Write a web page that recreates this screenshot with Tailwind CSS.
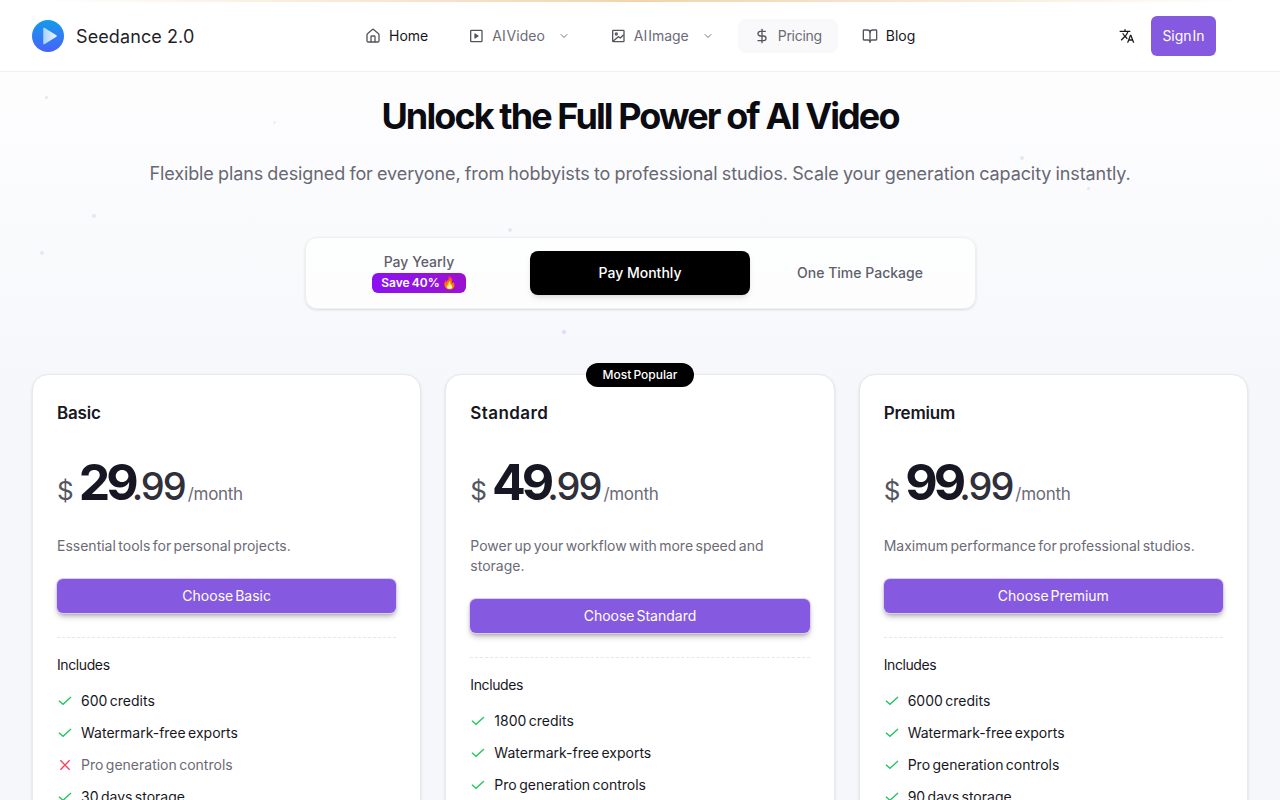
<!DOCTYPE html>
<html lang="en">
<head>
    <meta charset="UTF-8">
    <meta name="viewport" content="width=device-width, initial-scale=1.0">
    <title>Pricing - Seedance 2.0</title>
    <script src="https://cdn.jsdelivr.net/npm/@tailwindcss/browser@4"></script>
</head>
<body class="relative bg-gradient-to-b from-white to-[#f6f7fb] to-50% font-['Inter',sans-serif] text-[#171723] h-[800px] overflow-hidden">

    <!-- background specks -->
    <div class="absolute left-[45px] top-[96px] w-[3px] h-[3px] rounded-full bg-[#e6e7ef]"></div>
    <div class="absolute left-[273px] top-[121px] w-[3px] h-[3px] rounded-full bg-[#eceef4]"></div>
    <div class="absolute left-[92px] top-[214px] w-[4px] h-[4px] rounded-full bg-[#e6e7ef]"></div>
    <div class="absolute left-[40px] top-[251px] w-[4px] h-[4px] rounded-full bg-[#e6e7ef]"></div>
    <div class="absolute left-[508px] top-[228px] w-[4px] h-[4px] rounded-full bg-[#e6e7ef]"></div>
    <div class="absolute left-[562px] top-[330px] w-[4px] h-[4px] rounded-full bg-[#dcdcfa]"></div>
    <div class="absolute left-[1020px] top-[156px] w-[4px] h-[4px] rounded-full bg-[#e6e7ef]"></div>
    <div class="absolute left-[1087px] top-[187px] w-[3px] h-[3px] rounded-full bg-[#e6e7ef]"></div>

    <header class="relative h-[72px] bg-white/80 border-b border-[#f0f0f4]">
        <div class="absolute top-0 left-[40px] right-[32px] h-[2px] bg-gradient-to-r from-transparent via-[#f3d3ad] to-transparent"></div>
        <div class="h-full flex items-center pl-8 pr-16">
            <div class="flex items-center gap-3 w-[317px]">
                <svg class="w-8 h-8" viewBox="0 0 32 32">
                    <defs>
                        <linearGradient id="logo" x1="0" y1="0" x2="0" y2="1"><stop offset="0" stop-color="#119bea"/><stop offset="1" stop-color="#4a62fb"/></linearGradient>
                        <linearGradient id="play" x1="0" y1="0" x2="1" y2="0"><stop offset="0" stop-color="#a9d4fa"/><stop offset="1" stop-color="#eaf4fe"/></linearGradient>
                    </defs>
                    <circle cx="16" cy="16" r="16" fill="url(#logo)"/>
                    <path d="M12 8.5 L24 16 L12 23.5 Z" fill="url(#play)" stroke="url(#play)" stroke-width="1.5" stroke-linejoin="round"/>
                </svg>
                <span class="text-[18px] tracking-[0.1px] pt-[1px] text-[#1f1f29]">Seedance 2.0</span>
            </div>

            <nav class="flex items-center gap-2 text-sm">
                <a class="flex items-center gap-2 px-4 h-[34px] text-[#18181b]">
                    <svg class="w-4 h-4 text-[#55555f]" viewBox="0 0 24 24" fill="none" stroke="currentColor" stroke-width="2" stroke-linecap="round" stroke-linejoin="round"><path d="M15 21v-8a1 1 0 0 0-1-1h-4a1 1 0 0 0-1 1v8"/><path d="M3 10a2 2 0 0 1 .709-1.528l7-5.999a2 2 0 0 1 2.582 0l7 5.999A2 2 0 0 1 21 10v9a2 2 0 0 1-2 2H5a2 2 0 0 1-2-2z"/></svg>
                    Home
                </a>
                <a class="flex items-center gap-2 px-4 h-[34px] text-[#6b6b76]">
                    <svg class="w-4 h-4 text-[#55555f]" viewBox="0 0 24 24" fill="none" stroke="currentColor" stroke-width="2" stroke-linejoin="round"><rect x="4" y="3.5" width="17" height="17" rx="1"/><path d="M10.5 9l4.5 3-4.5 3z" fill="currentColor"/></svg>
                    <span class="[word-spacing:-3px]">AI Video</span>
                    <svg class="w-3 h-3 ml-[5px] text-[#77777f]" viewBox="0 0 24 24" fill="none" stroke="currentColor" stroke-width="2" stroke-linecap="round" stroke-linejoin="round"><path d="m6 9 6 6 6-6"/></svg>
                </a>
                <a class="flex items-center gap-2 px-4 h-[34px] text-[#6b6b76]">
                    <svg class="w-4 h-4 text-[#55555f]" viewBox="0 0 24 24" fill="none" stroke="currentColor" stroke-width="2" stroke-linejoin="round"><rect x="4" y="3.5" width="17" height="17" rx="1"/><circle cx="9.5" cy="9" r="1.5"/><path d="M20.5 10l-5 5-3-2-8 7"/></svg>
                    <span class="[word-spacing:-3px]">AI Image</span>
                    <svg class="w-3 h-3 ml-[5px] text-[#77777f]" viewBox="0 0 24 24" fill="none" stroke="currentColor" stroke-width="2" stroke-linecap="round" stroke-linejoin="round"><path d="m6 9 6 6 6-6"/></svg>
                </a>
                <a class="flex items-center gap-2 px-4 h-[34px] rounded-lg bg-[#f9f9fc] text-[#6b6b76] tracking-[-0.3px]">
                    <svg class="w-4 h-4 text-[#55555f]" viewBox="0 0 24 24" fill="none" stroke="currentColor" stroke-width="2" stroke-linecap="round" stroke-linejoin="round"><line x1="12" y1="2" x2="12" y2="22"/><path d="M17 5H9.5a3.5 3.5 0 0 0 0 7h5a3.5 3.5 0 0 1 0 7H6"/></svg>
                    Pricing
                </a>
                <a class="flex items-center gap-2 px-4 h-[34px] text-[#18181b]">
                    <svg class="w-4 h-4 text-[#55555f]" viewBox="0 0 24 24" fill="none" stroke="currentColor" stroke-width="2" stroke-linecap="round" stroke-linejoin="round"><path d="M12 7v14"/><path d="M3 18a1 1 0 0 1-1-1V4a1 1 0 0 1 1-1h5a4 4 0 0 1 4 4 4 4 0 0 1 4-4h5a1 1 0 0 1 1 1v13a1 1 0 0 1-1 1h-6a3 3 0 0 0-3 3 3 3 0 0 0-3-3z"/></svg>
                    Blog
                </a>
            </nav>

            <div class="ml-auto flex items-center gap-4">
                <svg class="w-4 h-4 text-[#18181b]" viewBox="0 0 24 24" fill="currentColor"><path d="M12.87 15.07l-2.54-2.51.03-.03c1.74-1.94 2.98-4.17 3.71-6.53H17V4h-7V2H8v2H1v1.99h11.17C11.5 7.92 10.44 9.75 9 11.35 8.07 10.32 7.3 9.19 6.69 8h-2c.73 1.63 1.73 3.17 2.98 4.56l-5.09 5.02L4 19l5-5 3.11 3.11.76-2.04zM18.5 10h-2L12 22h2l1.12-3h4.75L21 22h2l-4.5-12zm-2.62 7l1.62-4.33L19.12 17h-3.24z"/></svg>
                <button class="w-[65px] h-10 rounded-md bg-[#855ae0] text-white text-sm [word-spacing:-3px]">Sign In</button>
            </div>
        </div>
    </header>

    <main class="relative px-8">
        <h1 class="mt-[24px] text-center text-[36px] leading-10 font-bold tracking-[-1.9px] text-[#0b0b12]">Unlock the Full Power of AI Video</h1>
        <p class="mt-[24px] text-center text-lg leading-7 text-[#686873] tracking-[-0.1px] [word-spacing:-0.7px]">Flexible plans designed for everyone, from hobbyists to professional studios. Scale your generation capacity instantly.</p>

        <div class="mt-[49px] mx-auto w-[671px] h-[72px] rounded-xl bg-white/70 border border-[#eeeff4] shadow-sm flex items-center justify-center text-sm font-medium">
            <button class="w-[220px] flex flex-col items-center text-[#5f5f6a] -translate-x-px -translate-y-px">
                <span class="leading-5">Pay Yearly</span>
                <span class="h-5 px-[9px] rounded-md bg-gradient-to-r from-[#8b10f0] to-[#9b10d0] text-white text-xs font-semibold leading-5 translate-y-px [word-spacing:-1px]">Save 40% 🔥</span>
            </button>
            <button class="w-[220px] h-11 rounded-lg bg-black text-white shadow-md">Pay Monthly</button>
            <button class="w-[220px] text-[#5f5f6a]">One Time Package</button>
        </div>

        <div class="mt-[65px] grid grid-cols-3 gap-6 items-start">

            <section class="bg-white border border-[#e8e8ee] rounded-2xl px-6 pt-[26px] h-[600px] shadow-sm">
                <h3 class="text-[17px] leading-6 font-semibold tracking-[-0.2px]">Basic</h3>
                <div class="mt-[20px] h-[77px] flex items-baseline text-[#55555f]">
                    <span class="text-[26px]">$</span>
                    <span class="ml-[5px] text-[50px] font-bold tracking-[-4px] text-[#171723]">29</span>
                    <span class="ml-[-3px] text-[38px] font-medium tracking-[-2px] text-[#30303a]">.99</span>
                    <span class="ml-[3px] text-[17px] tracking-[-0.3px] text-[#6b6b76]">/month</span>
                </div>
                <p class="mt-[14px] text-sm leading-5 text-[#6b6b76] [word-spacing:-1.5px]">Essential tools for personal projects.</p>
                <button class="mt-[23px] w-full h-[34px] rounded-md bg-[#855ae0] text-white text-sm shadow-md shadow-black/30 ring-1 ring-[#d9cff5] [word-spacing:-2px]">Choose Basic</button>
                <div class="mt-[24px] border-t border-dashed border-[#e6e6ec]"></div>
                <p class="mt-[17px] text-sm leading-5 tracking-[-0.4px]">Includes</p>
                <ul class="mt-[10px] text-sm [word-spacing:-1.5px]">
                    <li class="h-8 flex items-center gap-2"><svg class="w-4 h-4 text-[#22c55e]" viewBox="0 0 24 24" fill="none" stroke="currentColor" stroke-width="2"><path d="M21 6 9 17 3 11.5"/></svg>600 credits</li>
                    <li class="h-8 flex items-center gap-2"><svg class="w-4 h-4 text-[#22c55e]" viewBox="0 0 24 24" fill="none" stroke="currentColor" stroke-width="2"><path d="M21 6 9 17 3 11.5"/></svg>Watermark-free exports</li>
                    <li class="h-8 flex items-center gap-2 text-[#6b6b76]"><svg class="w-4 h-4 text-[#f43f5e]" viewBox="0 0 24 24" fill="none" stroke="currentColor" stroke-width="2"><path d="M19 5 5 19M5 5l14 14"/></svg>Pro generation controls</li>
                    <li class="h-8 flex items-center gap-2"><svg class="w-4 h-4 text-[#22c55e]" viewBox="0 0 24 24" fill="none" stroke="currentColor" stroke-width="2"><path d="M21 6 9 17 3 11.5"/></svg>30 days storage</li>
                </ul>
            </section>

            <section class="relative bg-white border border-[#e8e8ee] rounded-2xl px-6 pt-[26px] h-[600px] shadow-sm">
                <span class="absolute -top-3 left-1/2 -translate-x-1/2 h-6 w-[108px] rounded-full bg-black text-white text-xs font-medium leading-6 text-center [word-spacing:-1px]">Most Popular</span>
                <h3 class="text-[17px] leading-6 font-semibold tracking-[0.4px]">Standard</h3>
                <div class="mt-[20px] h-[77px] flex items-baseline text-[#55555f]">
                    <span class="text-[26px]">$</span>
                    <span class="ml-[5px] text-[50px] font-bold tracking-[-4px] text-[#171723]">49</span>
                    <span class="ml-[-3px] text-[38px] font-medium tracking-[-2px] text-[#30303a]">.99</span>
                    <span class="ml-[3px] text-[17px] tracking-[-0.3px] text-[#6b6b76]">/month</span>
                </div>
                <p class="mt-[14px] text-sm leading-5 text-[#6b6b76] [word-spacing:-1.5px]">Power up your workflow with more speed and storage.</p>
                <button class="mt-[23px] w-full h-[34px] rounded-md bg-[#855ae0] text-white text-sm shadow-md shadow-black/30 ring-1 ring-[#d9cff5] [word-spacing:-2px]">Choose Standard</button>
                <div class="mt-[24px] border-t border-dashed border-[#e6e6ec]"></div>
                <p class="mt-[17px] text-sm leading-5 tracking-[-0.4px]">Includes</p>
                <ul class="mt-[10px] text-sm [word-spacing:-1.5px]">
                    <li class="h-8 flex items-center gap-2"><svg class="w-4 h-4 text-[#22c55e]" viewBox="0 0 24 24" fill="none" stroke="currentColor" stroke-width="2"><path d="M21 6 9 17 3 11.5"/></svg>1800 credits</li>
                    <li class="h-8 flex items-center gap-2"><svg class="w-4 h-4 text-[#22c55e]" viewBox="0 0 24 24" fill="none" stroke="currentColor" stroke-width="2"><path d="M21 6 9 17 3 11.5"/></svg>Watermark-free exports</li>
                    <li class="h-8 flex items-center gap-2"><svg class="w-4 h-4 text-[#22c55e]" viewBox="0 0 24 24" fill="none" stroke="currentColor" stroke-width="2"><path d="M21 6 9 17 3 11.5"/></svg>Pro generation controls</li>
                </ul>
            </section>

            <section class="bg-white border border-[#e8e8ee] rounded-2xl px-6 pt-[26px] h-[600px] shadow-sm">
                <h3 class="text-[17px] leading-6 font-semibold tracking-[-0.2px]">Premium</h3>
                <div class="mt-[20px] h-[77px] flex items-baseline text-[#55555f]">
                    <span class="text-[26px]">$</span>
                    <span class="ml-[5px] text-[50px] font-bold tracking-[-4px] text-[#171723]">99</span>
                    <span class="ml-[-3px] text-[38px] font-medium tracking-[-2px] text-[#30303a]">.99</span>
                    <span class="ml-[3px] text-[17px] tracking-[-0.3px] text-[#6b6b76]">/month</span>
                </div>
                <p class="mt-[14px] text-sm leading-5 text-[#6b6b76] [word-spacing:-1.5px]">Maximum performance for professional studios.</p>
                <button class="mt-[23px] w-full h-[34px] rounded-md bg-[#855ae0] text-white text-sm shadow-md shadow-black/30 ring-1 ring-[#d9cff5] [word-spacing:-2px]">Choose Premium</button>
                <div class="mt-[24px] border-t border-dashed border-[#e6e6ec]"></div>
                <p class="mt-[17px] text-sm leading-5 tracking-[-0.4px]">Includes</p>
                <ul class="mt-[10px] text-sm [word-spacing:-1.5px]">
                    <li class="h-8 flex items-center gap-2"><svg class="w-4 h-4 text-[#22c55e]" viewBox="0 0 24 24" fill="none" stroke="currentColor" stroke-width="2"><path d="M21 6 9 17 3 11.5"/></svg>6000 credits</li>
                    <li class="h-8 flex items-center gap-2"><svg class="w-4 h-4 text-[#22c55e]" viewBox="0 0 24 24" fill="none" stroke="currentColor" stroke-width="2"><path d="M21 6 9 17 3 11.5"/></svg>Watermark-free exports</li>
                    <li class="h-8 flex items-center gap-2"><svg class="w-4 h-4 text-[#22c55e]" viewBox="0 0 24 24" fill="none" stroke="currentColor" stroke-width="2"><path d="M21 6 9 17 3 11.5"/></svg>Pro generation controls</li>
                    <li class="h-8 flex items-center gap-2"><svg class="w-4 h-4 text-[#22c55e]" viewBox="0 0 24 24" fill="none" stroke="currentColor" stroke-width="2"><path d="M21 6 9 17 3 11.5"/></svg>90 days storage</li>
                </ul>
            </section>
        </div>
    </main>
</body>
</html>
